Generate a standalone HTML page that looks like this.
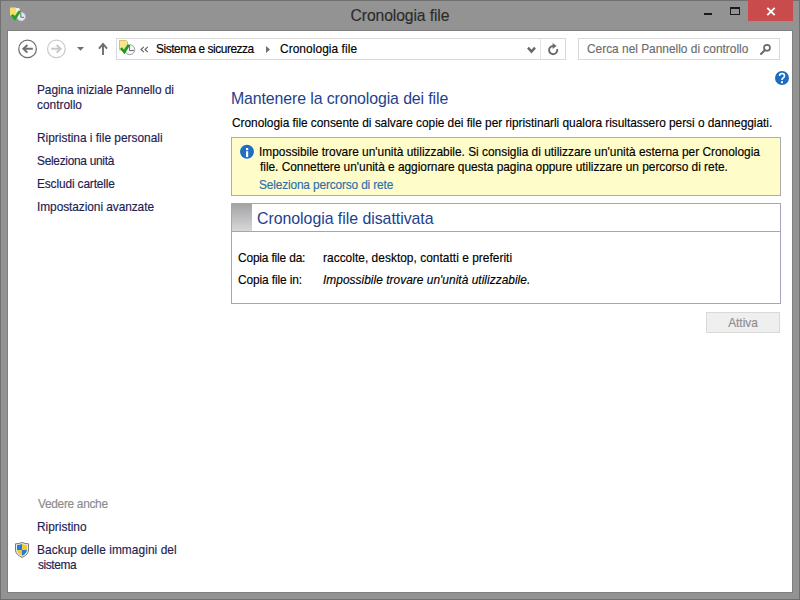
<!DOCTYPE html>
<html><head><meta charset="utf-8">
<style>
*{margin:0;padding:0;box-sizing:border-box}
html,body{width:800px;height:600px;overflow:hidden}
body{background:#939393;font-family:"Liberation Sans",sans-serif;position:relative;color:#000}
.a{position:absolute;white-space:nowrap;-webkit-text-stroke:0.15px currentColor}
#outer{left:0;top:0;width:800px;height:600px;border:1px solid #707070}
#inner{left:7px;top:30px;width:786px;height:563px;background:#7f7f7f}
#client{left:8px;top:31px;width:784px;height:561px;background:#fff}
#title{left:0;top:7px;width:800px;text-align:center;font-size:15.7px;color:#2b2b2b;letter-spacing:-0.1px}
#close{left:748px;top:0;width:45px;height:21px;background:#c94b4b}
.t12{font-size:11.9px}
.nav{color:#1e2152}
.addr{left:116px;top:38px;width:450px;height:22px;border:1px solid #d9d9d9}
.search{left:578px;top:38px;width:202px;height:22px;border:1px solid #d9d9d9}
#h1{left:231px;top:90px;font-size:15.9px;color:#1e3f8e;letter-spacing:-0.115px;-webkit-text-stroke:0}
#infobox{left:231px;top:137px;width:550px;height:59px;background:#fefcc8;border:1px solid #ababab}
#box{left:231px;top:203px;width:550px;height:101px;border:1px solid #a3a3c2}
#grad{left:232px;top:204px;width:20px;height:27px;background:linear-gradient(#a3a3a3,#d8d8dc)}
#divl{left:232px;top:231px;width:548px;height:1px;background:#a3a3c2}
#btn{left:706px;top:312px;width:74px;height:21px;background:#efefef;border:1px solid #d9d9d9;color:#8d8d8d;text-align:center;font-size:11.9px;line-height:20px}
</style></head><body>
<div class="a" id="outer"></div>
<div class="a" id="inner"></div>
<div class="a" id="client"></div>
<div class="a" id="title">Cronologia file</div>
<div class="a" id="close"></div>
<svg class="a" style="left:0;top:0" width="800" height="600">
  <!-- min -->
  <rect x="704" y="13" width="8" height="2" fill="#1a1a1a"/>
  <!-- max -->
  <rect x="730.5" y="7.5" width="9" height="7" fill="none" stroke="#1a1a1a" stroke-width="1"/>
  <rect x="730" y="7" width="10" height="2" fill="#1a1a1a"/>
  <!-- close x -->
  <path d="M767.3 7.8 L774.7 15.2 M774.7 7.8 L767.3 15.2" stroke="#fff" stroke-width="1.9"/>
  <!-- back -->
  <circle cx="27.55" cy="48.9" r="8.8" fill="none" stroke="#6e6e6e" stroke-width="1.25"/>
  <path d="M23.2 48.8 H32.8 M27.4 45 L23.4 48.8 L27.4 52.6" fill="none" stroke="#707070" stroke-width="2"/>
  <circle cx="56.4" cy="48.9" r="8.8" fill="none" stroke="#cbcbcb" stroke-width="1.25"/>
  <path d="M51.2 48.8 H60.8 M56.6 45 L60.6 48.8 L56.6 52.6" fill="none" stroke="#c8c8c8" stroke-width="2"/>
  <path d="M77 47 H84 L80.5 50.8 Z" fill="#707070"/>
  <path d="M103 44 V55 M99 48.6 L103 44 L107 48.6" fill="none" stroke="#6d6d6d" stroke-width="1.9"/>
  <!-- addr divider -->
  <rect x="540" y="39" width="1" height="20" fill="#e3e3e3"/>
  <!-- chevron -->
  <path d="M528 47.6 L531.5 51.6 L535 47.6" fill="none" stroke="#686868" stroke-width="2.4"/>
  <!-- refresh -->
  <path d="M553.2 46 A4.1 4.1 0 1 0 557.1 49" fill="none" stroke="#6a6a6a" stroke-width="1.9"/>
  <path d="M552.6 43 L556.6 46 L552.6 49 Z" fill="#6a6a6a"/>
  <!-- magnifier -->
  <circle cx="767" cy="47.8" r="3" fill="none" stroke="#6a6a6a" stroke-width="1.7"/>
  <path d="M764.8 50.2 L761 54" stroke="#6a6a6a" stroke-width="2" stroke-linecap="round"/>
  <!-- help -->
  <circle cx="782" cy="78" r="7" fill="#1d6cbf"/>
  <path d="M779.6 76 Q779.6 73.5 782 73.5 Q784.5 73.5 784.5 75.8 Q784.5 77.3 782.8 78.2 Q782 78.7 782 80" fill="none" stroke="#fff" stroke-width="1.6"/>
  <rect x="781" y="81.2" width="2" height="2" fill="#fff"/>
  <!-- breadcrumb << -->
  <path d="M143.8 46.8 L141 49.5 L143.8 52.2 M147.8 46.8 L145 49.5 L147.8 52.2" fill="none" stroke="#606060" stroke-width="1.1"/>
  <!-- separator triangle -->
  <path d="M266 46 L270 49.5 L266 53 Z" fill="#707070"/>
  <!-- address icon -->
  <path d="M119.5 40.5 H126 L127.5 42 V50 H119.5 Z" fill="#f8e48a" stroke="#d8c070" stroke-width="1"/>
  <circle cx="129.8" cy="49.7" r="5" fill="#f2f2f8" stroke="#a0a0a8" stroke-width="1"/>
  <path d="M129.5 45 V50.5 H134" fill="none" stroke="#707070" stroke-width="1"/>
  <path d="M121 48 L124.3 52 L128.8 44.8" fill="none" stroke="#1c9c1c" stroke-width="2.5"/>
  <!-- title icon -->
  <path d="M10 7.5 H16 L17.5 9 V15.5 H10 Z" fill="#f7de6a"/>
  <path d="M16 8 H19 L20 9.5 V12 H16 Z" fill="#f0f0e8"/>
  <circle cx="21.2" cy="16.6" r="4.3" fill="#e8e8f6" stroke="#b4b4c4" stroke-width="0.8"/>
  <path d="M20.8 13 V17.3 H24" fill="none" stroke="#5a7a6a" stroke-width="1"/>
  <path d="M12 14.8 L14.8 18.5 L19.9 11" fill="none" stroke="#24a024" stroke-width="2.5"/>
</svg>
<div class="a addr"></div>
<div class="a search"></div>
<div class="a t12" id="sistema" style="left:156px;top:42px;letter-spacing:-0.458px">Sistema e sicurezza</div>
<div class="a t12" id="addrcron" style="left:280px;top:42px;letter-spacing:0.071px">Cronologia file</div>
<div class="a t12" id="cerca" style="left:587px;top:42px;color:#6d6d6d">Cerca nel Pannello di controllo</div>

<div class="a t12 nav" id="pagina1" style="left:37px;top:83px;letter-spacing:-0.077px">Pagina iniziale Pannello di</div>
<div class="a t12 nav" id="pagina2" style="left:37px;top:98px">controllo</div>
<div class="a t12 nav" id="rip1" style="left:37px;top:131px">Ripristina i file personali</div>
<div class="a t12 nav" id="sel" style="left:37px;top:154px;letter-spacing:-0.286px">Seleziona unità</div>
<div class="a t12 nav" id="esc" style="left:37px;top:177px;letter-spacing:-0.133px">Escludi cartelle</div>
<div class="a t12 nav" id="imps" style="left:37px;top:200px;letter-spacing:-0.065px">Impostazioni avanzate</div>
<div class="a t12" id="vedere" style="left:38px;top:497px;color:#8c8c8c;letter-spacing:-0.309px">Vedere anche</div>
<div class="a t12 nav" id="ripr" style="left:37px;top:520px">Ripristino</div>
<div class="a t12 nav" id="backup1" style="left:37px;top:543px;letter-spacing:0.062px">Backup delle immagini del</div>
<div class="a t12 nav" id="backup2" style="left:38px;top:558px;letter-spacing:-0.400px">sistema</div>

<div class="a" id="h1">Mantenere la cronologia dei file</div>
<div class="a t12" id="desc" style="left:232px;top:116px;letter-spacing:-0.028px">Cronologia file consente di salvare copie dei file per ripristinarli qualora risultassero persi o danneggiati.</div>
<div class="a" id="infobox"></div>
<svg class="a" style="left:232px;top:137px" width="30" height="30">
  <circle cx="15" cy="14.8" r="7.6" fill="#fffef0"/>
  <circle cx="15" cy="14.8" r="7" fill="#1f6fc0"/>
  <rect x="14" y="11" width="2.2" height="2.2" fill="#fff"/>
  <rect x="14" y="14.3" width="2.2" height="5.8" fill="#fff"/>
</svg>
<div class="a t12" id="info1" style="left:259px;top:145px">Impossibile trovare un'unità utilizzabile. Si consiglia di utilizzare un'unità esterna per Cronologia</div>
<div class="a t12" id="info2" style="left:260px;top:160px;letter-spacing:-0.020px">file. Connettere un'unità e aggiornare questa pagina oppure utilizzare un percorso di rete.</div>
<div class="a t12" id="link" style="left:259px;top:178px;color:#2f6eae;letter-spacing:-0.156px">Seleziona percorso di rete</div>
<div class="a" id="box"></div>
<div class="a" id="grad"></div>
<div class="a" id="divl"></div>
<div class="a" id="boxtitle" style="left:257px;top:210px;font-size:15.9px;color:#1e3f8e;-webkit-text-stroke:0;letter-spacing:-0.038px">Cronologia file disattivata</div>
<div class="a t12" id="da" style="left:238px;top:251px;letter-spacing:-0.154px">Copia file da:</div>
<div class="a t12" id="rac" style="left:323px;top:251px;letter-spacing:0.037px">raccolte, desktop, contatti e preferiti</div>
<div class="a t12" id="in" style="left:238px;top:273px;letter-spacing:-0.108px">Copia file in:</div>
<div class="a t12" id="imp" style="left:323px;top:273px;font-style:italic;letter-spacing:0.034px">Impossibile trovare un'unità utilizzabile.</div>
<div class="a" id="btn">Attiva</div>
<svg class="a" style="left:15px;top:542px" width="14" height="16" viewBox="0 0 14 16">
  <path d="M7 0.5 Q10 1.8 13.5 1.8 V8 Q13.5 12.5 7 15.5 Q0.5 12.5 0.5 8 V1.8 Q4 1.8 7 0.5 Z" fill="#e8eef4" stroke="#7a7a7a" stroke-width="1"/>
  <path d="M2 3 Q4.5 3 7 2 V8 H2 Z" fill="#2a7ad0"/>
  <path d="M7 2 Q9.5 3 12 3 V8 H7 Z" fill="#f0c830"/>
  <path d="M2 8 H7 V13.8 Q2.5 11.8 2 8 Z" fill="#f0c830"/>
  <path d="M7 8 H12 Q11.5 11.8 7 13.8 Z" fill="#2a7ad0"/>
</svg>
</body></html>
